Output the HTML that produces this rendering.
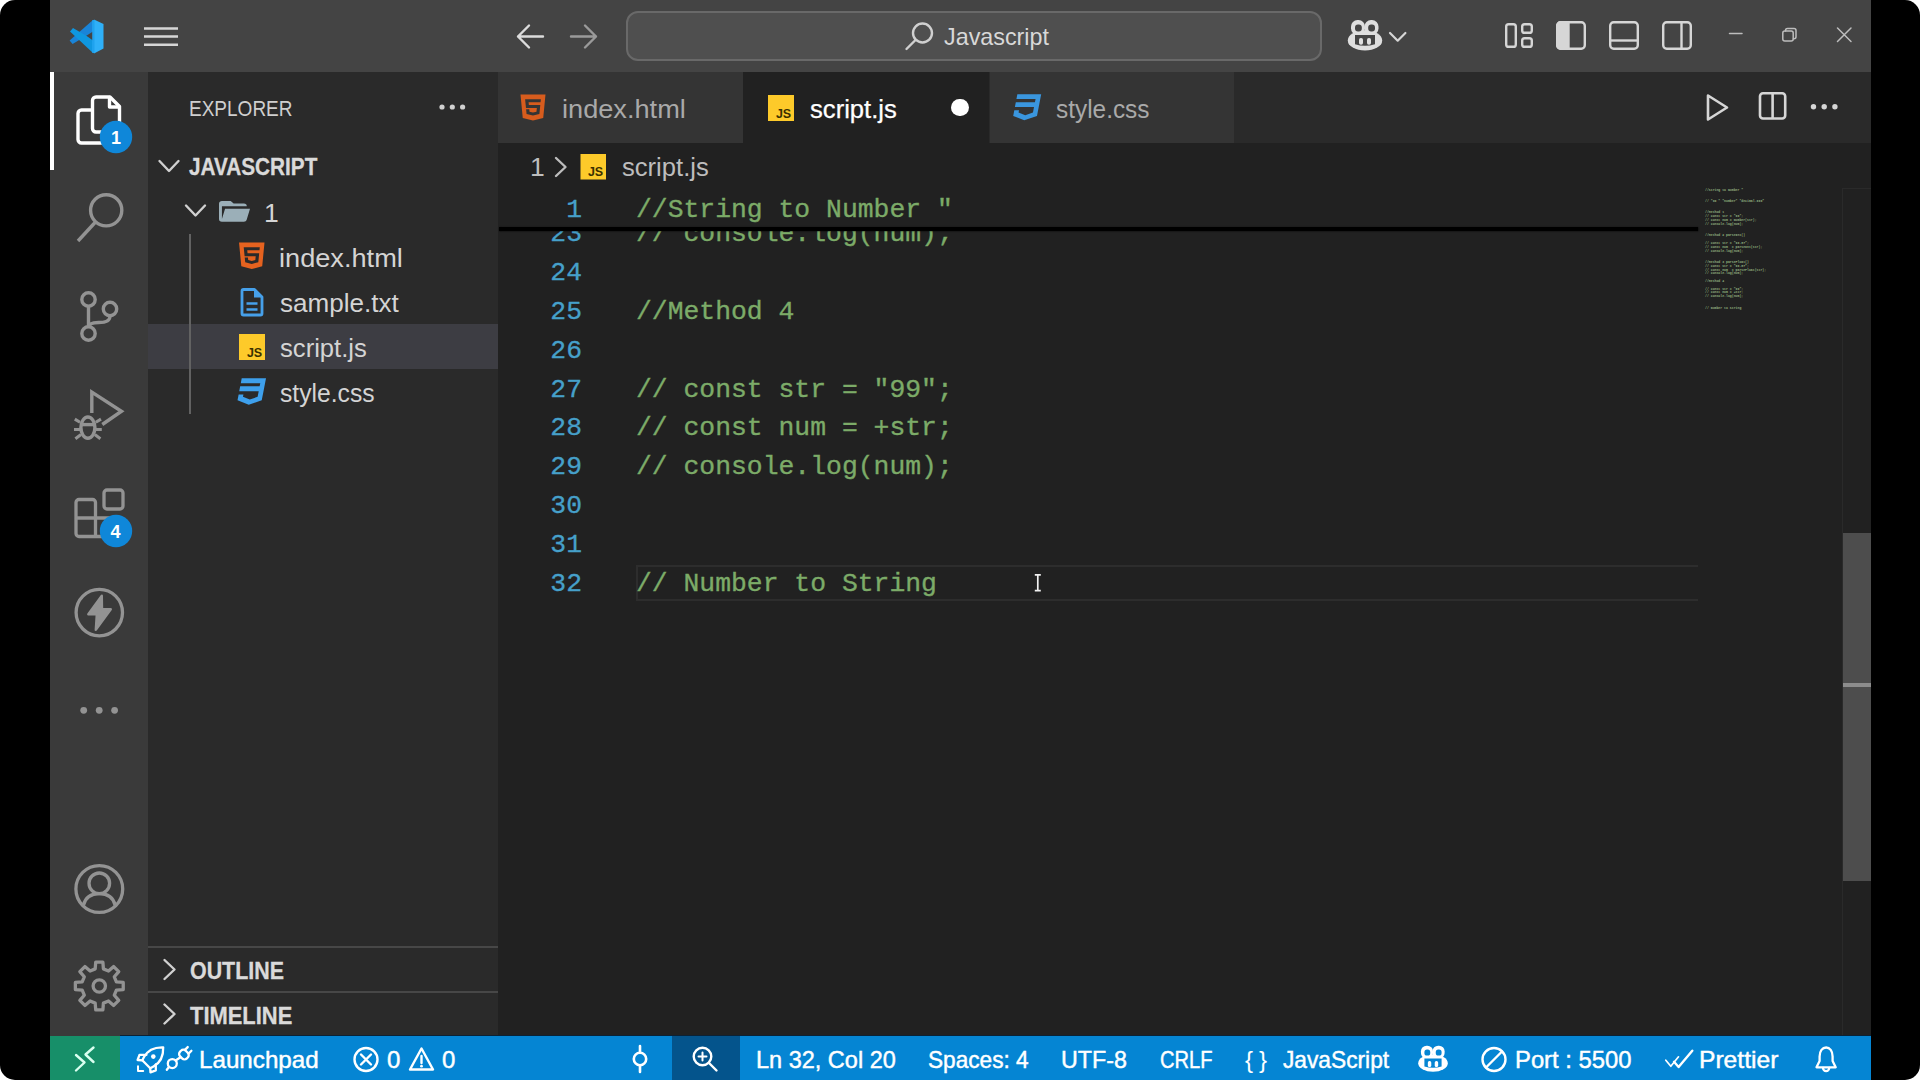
<!DOCTYPE html>
<html lang="en">
<head>
<meta charset="utf-8">
<title>script.js - Javascript - Visual Studio Code</title>
<style>
*{box-sizing:border-box;margin:0;padding:0}
html,body{width:1920px;height:1080px;overflow:hidden;background:#fff}
body{font-family:"Liberation Sans",sans-serif;color:#ccc;position:relative}
#frame{position:absolute;left:0;top:0;width:1920px;height:1080px;background:#000;border-radius:15px;overflow:hidden}
/* everything inside #frame is in page coordinates */
.b{position:absolute}
#editorbg{left:50px;top:0;width:1821px;height:1080px;background:#212121}
#titlebar{left:50px;top:0;width:1821px;height:72px;background:#444444}
#activity{left:50px;top:72px;width:98px;height:964px;background:#3a3a3a}
#sidebar{left:148px;top:72px;width:350px;height:964px;background:#2a2a2a}
#tabs{left:497px;top:72px;width:1374px;height:71px;background:#2a2a2a}
#status{left:50px;top:1036px;width:1821px;height:44px;background:#0585d3}
.t{position:absolute;white-space:nowrap;line-height:1;transform:translateY(-50%);color:#d4d4d4;font-size:26.5px}
.w{color:#fff}
.code{position:absolute;font-family:"Liberation Mono",monospace;font-size:26.4px;line-height:1;white-space:pre;color:#7cab68;-webkit-text-stroke:0.35px #7cab68;transform:translateY(-50%)}
.ln{position:absolute;font-family:"Liberation Mono",monospace;font-size:26.4px;line-height:1;white-space:pre;color:#46a0ca;-webkit-text-stroke:0.3px #46a0ca;transform:translateY(-50%);text-align:right;width:60px}
#icons{position:absolute;left:0;top:0}
</style>
</head>
<body>
<div id="frame">
<div class="b" id="editorbg"></div>
<div class="b" id="titlebar"></div>
<div class="b" id="activity"></div>
<div class="b" id="sidebar"></div>
<div class="b" id="tabs"></div>
<div class="b" id="status"></div>
<!-- ===== TITLE BAR ===== -->
<div class="b" id="cmdbox" style="left:626px;top:11px;width:696px;height:50px;background:#4f4f4f;border:2px solid #696969;border-radius:12px"></div>
<span class="t" id="tx_title" style="left:944px;top:37px;font-size:24px;color:#d8d8d8;transform:translateY(-50%) scaleX(0.972);transform-origin:0 50%">Javascript</span>
<svg id="ic_title" class="b" style="left:0;top:0" width="1920" height="80" viewBox="0 0 1920 80" fill="none">
  <!-- vscode logo -->
  <g>
    <path d="M69.600 40.600 L72.600 44 L86.700 35.500 L93 31.500 L93 20 Z" fill="#1a84d8"/>
    <path d="M70 31.500 L73 28 L86.700 36 L93 40.500 L93 53 Z" fill="#0f97e0"/>
    <path d="M92.500 20.200 L94.500 19.800 L103.500 24 L103.500 48.500 L94.500 53.200 L92.500 52.800 Z" fill="#2fb0f8"/>
    <path d="M92.500 20.200 L94.500 19.800 L94.500 53.200 L92.500 52.800 Z" fill="#1fa2ee"/>
  </g>
  <!-- hamburger -->
  <g stroke="#d6d6d6" stroke-width="2.4">
    <path d="M144 28.5 H178 M144 36.5 H178 M144 44.7 H178"/>
  </g>
  <!-- back / forward -->
  <g stroke="#dcdcdc" stroke-width="2.4" stroke-linecap="round" stroke-linejoin="round">
    <path d="M543 36.5 H518 M529 25.5 L518 36.5 L529 47.5"/>
  </g>
  <g stroke="#9a9a9a" stroke-width="2.4" stroke-linecap="round" stroke-linejoin="round">
    <path d="M571 36.5 H596 M585 25.5 L596 36.5 L585 47.5"/>
  </g>
  <!-- search icon -->
  <g stroke="#d0d0d0" stroke-width="2.4" stroke-linecap="round">
    <circle cx="922.5" cy="33" r="9.5"/>
    <path d="M915.5 40 L906.5 49"/>
  </g>
  <!-- copilot -->
  <g id="copilot">
    <rect x="1351" y="20" width="14" height="15" rx="6.500" fill="#dedede"/>
    <rect x="1364.500" y="20" width="14" height="15" rx="6.500" fill="#dedede"/>
    <ellipse cx="1365" cy="40.400" rx="17.200" ry="10.100" fill="#dedede"/>
    <rect x="1355" y="24.600" width="6.800" height="7" rx="3" fill="#444"/>
    <rect x="1368.200" y="24.600" width="6.800" height="7" rx="3" fill="#444"/>
    <path d="M1355 35 H1375 V44.200 Q1365 47.200 1355 44.200 Z" fill="#444"/>
    <rect x="1359" y="38" width="4" height="6.800" rx="1.800" fill="#dedede"/>
    <rect x="1367" y="38" width="4" height="6.800" rx="1.800" fill="#dedede"/>
  </g>
  <path d="M1390 33 L1397.700 40.700 L1405.400 33" stroke="#d6d6d6" stroke-width="2.200" stroke-linecap="round" stroke-linejoin="round"/>
  <!-- layout icons -->
  <g stroke="#d6d6d6" stroke-width="2.400" stroke-linejoin="round">
    <rect x="1506.200" y="24.200" width="9.600" height="22.600" rx="2.400"/>
    <rect x="1522.200" y="24.200" width="9.600" height="8.600" rx="2.400"/>
    <rect x="1522.200" y="38.200" width="9.600" height="8.600" rx="2.400"/>
    <rect x="1557.200" y="22.200" width="27.600" height="26.600" rx="3.500"/>
    <path d="M1557.200 25.700 a3.500 3.500 0 0 1 3.500 -3.500 h7.800 v26.600 h-7.800 a3.500 3.500 0 0 1 -3.500 -3.500 z" fill="#d6d6d6"/>
    <rect x="1610.200" y="22.200" width="27.600" height="26.600" rx="3.500"/>
    <path d="M1610.200 40.500 h27.600"/>
    <rect x="1663.200" y="22.200" width="27.600" height="26.600" rx="3.500"/>
    <path d="M1681.500 22.200 v26.600"/>
  </g>
  <!-- window controls -->
  <g stroke="#bdbdbd" stroke-width="1.500" stroke-linecap="round" stroke-linejoin="round">
    <path d="M1729.500 33.600 H1742"/>
    <rect x="1782.800" y="31" width="10.400" height="10" rx="2"/>
    <path d="M1785.500 31 v-0.600 a2 2 0 0 1 2 -2 h6.500 a2 2 0 0 1 2 2 v6.400 a2 2 0 0 1 -2 2 h-0.600" />
    <path d="M1837.500 28 L1851 41.500 M1851 28 L1837.500 41.500"/>
  </g>
</svg>

<!-- ===== ACTIVITY BAR ===== -->
<div class="b" id="actind" style="left:50px;top:72px;width:4px;height:98px;background:#fff"></div>
<svg id="ic_act" class="b" style="left:0;top:0" width="160" height="1040" viewBox="0 0 160 1040" fill="none">
  <!-- files (active) -->
  <g stroke="#ffffff" stroke-width="3.400" stroke-linejoin="round" stroke-linecap="round">
    <path d="M96 97 h14 l9.500 9.500 v22 a3.500 3.500 0 0 1 -3.500 3.500 h-20 a3.500 3.500 0 0 1 -3.500 -3.500 v-28 a3.500 3.500 0 0 1 3.500 -3.500 z"/>
    <path d="M109.500 97.500 v9.500 h9.500"/>
    <path d="M92 110 h-10.500 a3.500 3.500 0 0 0 -3.500 3.500 v26 a3.500 3.500 0 0 0 3.500 3.500 h19 a3.500 3.500 0 0 0 3.500 -3.500 v-7"/>
  </g>
  <circle cx="116" cy="137" r="16.200" fill="#0f87d9"/>
  <!-- search -->
  <g stroke="#939393" stroke-width="3.400" stroke-linecap="butt">
    <circle cx="106.200" cy="210.300" r="15.600"/>
    <path d="M95.500 222 L78 241"/>
  </g>
  <!-- source control -->
  <g stroke="#939393" stroke-width="3.400">
    <circle cx="88.500" cy="299.500" r="6.700"/>
    <circle cx="88.500" cy="333.500" r="6.700"/>
    <circle cx="110" cy="309" r="6.700"/>
    <path d="M88.500 306.200 V326.800"/>
    <path d="M110 315.700 c0 6.500 -6.500 6.800 -11.500 6.800 c-4.500 0 -10 0.800 -10 5" />
  </g>
  <!-- run and debug -->
  <g stroke="#939393" stroke-width="3.400" stroke-linejoin="miter" fill="none">
    <path d="M91.800 413 V392 L121.500 411.200 L102.300 424.500"/>
    <ellipse cx="87.900" cy="427.600" rx="7" ry="10.600"/>
    <path d="M81 424.600 h13.800"/>
    <path d="M80 422.300 l-5.200 -3.200 M95.800 422.300 l5.200 -3.200 M80.500 429.500 h-6.500 M95.300 429.500 h6.500 M81 434.500 l-5.600 4.300 M94.800 434.500 l5.600 4.300" stroke-width="3"/>
  </g>
  <!-- extensions -->
  <g stroke="#939393" stroke-width="3.300" stroke-linejoin="round">
    <rect x="104" y="490" width="19" height="19" rx="3"/>
    <path d="M76 502.500 a3 3 0 0 1 3 -3 h13.500 a3 3 0 0 1 3 3 v15.500 h14.500 a3 3 0 0 1 3 3 v12.500 a3 3 0 0 1 -3 3 h-31 a3 3 0 0 1 -3 -3 z"/>
    <path d="M76 518 h19.500 v18.500"/>
  </g>
  <circle cx="116" cy="531" r="16.200" fill="#0f87d9"/>
  <!-- thunder -->
  <g>
    <circle cx="99.300" cy="612.600" r="23.200" stroke="#939393" stroke-width="3.300"/>
    <path d="M101.800 595.800 L88.300 614.300 H96.800 L95.800 629.800 L110.800 609.200 H102 Z" fill="#939393" stroke="#939393" stroke-width="2.400" stroke-linejoin="round"/>
  </g>
  <!-- more -->
  <g fill="#939393">
    <circle cx="83.700" cy="710.300" r="3.400"/><circle cx="99.200" cy="710.300" r="3.400"/><circle cx="114.600" cy="710.300" r="3.400"/>
  </g>
  <!-- account -->
  <g stroke="#939393" stroke-width="3.300">
    <circle cx="99.300" cy="889" r="23.400"/>
    <circle cx="99.300" cy="883.300" r="10.300"/>
    <path d="M83.300 905.500 c2 -8 8.300 -11.800 16 -11.800 s14 3.800 16 11.800"/>
  </g>
  <!-- gear -->
  <g transform="translate(99.300 986)">
    <g stroke="#939393" stroke-width="3.300" stroke-linejoin="round">
      <path id="gearp" d="M-4.11 -17.11 L-3.58 -23.93 L3.58 -23.93 L4.11 -17.11 L9.20 -15.01 L14.39 -19.45 L19.45 -14.39 L15.01 -9.20 L17.11 -4.11 L23.93 -3.58 L23.93 3.58 L17.11 4.11 L15.01 9.20 L19.45 14.39 L14.39 19.45 L9.20 15.01 L4.11 17.11 L3.58 23.93 L-3.58 23.93 L-4.11 17.11 L-9.20 15.01 L-14.39 19.45 L-19.45 14.39 L-15.01 9.20 L-17.11 4.11 L-23.93 3.58 L-23.93 -3.58 L-17.11 -4.11 L-15.01 -9.20 L-19.45 -14.39 L-14.39 -19.45 L-9.20 -15.01 Z"/>
      <circle cx="0" cy="0" r="6.200"/>
    </g>
  </g>
</svg>
<span class="t w" id="tx_b1" style="left:111px;top:138px;font-size:18px;font-weight:bold">1</span>
<span class="t w" id="tx_b4" style="left:110.500px;top:532px;font-size:18px;font-weight:bold">4</span>

<!-- ===== SIDEBAR ===== -->
<span class="t" id="tx_explorer" style="top:109px;font-size:22px;color:#cfcfcf;transform:translateY(-50%) scaleX(0.864);transform-origin:0 50%;left:189.0px">EXPLORER</span>
<span class="t" id="tx_js" style="-webkit-text-stroke:0.3px #dadada;left:189px;top:167px;font-size:23px;font-weight:bold;color:#dadada;transform:translateY(-50%) scaleX(0.902);transform-origin:0 50%">JAVASCRIPT</span>
<div class="b" id="selrow" style="left:148px;top:324px;width:350px;height:45px;background:#3d3d43"></div>
<div class="b" id="guide" style="left:189px;top:234px;width:2px;height:180px;background:#626262"></div>
<span class="t" id="tx_f1" style="left:264px;top:213px">1</span>
<span class="t" id="tx_index" style="top:258px;transform:translateY(-50%) scaleX(1.025);transform-origin:0 50%;left:279.0px">index.html</span>
<span class="t" id="tx_sample" style="left:280px;top:303px;transform:translateY(-50%) scaleX(0.983);transform-origin:0 50%">sample.txt</span>
<span class="t" id="tx_script" style="left:280px;top:348px;transform:translateY(-50%) scaleX(0.967);transform-origin:0 50%">script.js</span>
<span class="t" id="tx_style" style="left:280px;top:393px;transform:translateY(-50%) scaleX(0.931);transform-origin:0 50%">style.css</span>
<div class="b" style="left:148px;top:946px;width:350px;height:2px;background:#474747"></div>
<div class="b" style="left:148px;top:991px;width:350px;height:2px;background:#474747"></div>
<span class="t" id="tx_outline" style="-webkit-text-stroke:0.3px #dadada;left:190px;top:971px;font-size:23px;font-weight:bold;color:#dadada;transform:translateY(-50%) scaleX(0.931);transform-origin:0 50%">OUTLINE</span>
<span class="t" id="tx_timeline" style="-webkit-text-stroke:0.3px #dadada;left:190px;top:1016px;font-size:23px;font-weight:bold;color:#dadada;transform:translateY(-50%) scaleX(0.953);transform-origin:0 50%">TIMELINE</span>
<svg id="ic_side" class="b" style="left:0;top:0" width="500" height="1040" viewBox="0 0 500 1040" fill="none">
  <!-- explorer dots -->
  <g fill="#d0d0d0"><circle cx="442" cy="107" r="2.600"/><circle cx="452.300" cy="107" r="2.600"/><circle cx="462.600" cy="107" r="2.600"/></g>
  <!-- chevrons -->
  <g stroke="#d0d0d0" stroke-width="2.400" stroke-linecap="round" stroke-linejoin="round">
    <path d="M159.500 161 L169 171 L178.500 161"/>
    <path d="M186 205.500 L195.500 215.500 L205 205.500"/>
    <path d="M164.500 960 L174.500 969.500 L164.500 979"/>
    <path d="M164.500 1004.500 L174.500 1014 L164.500 1023.500"/>
  </g>
  <!-- folder open -->
  <path transform="translate(216.08 195.82) scale(1.462 1.294)" d="M19 20H4a2 2 0 0 1-2-2V6c0-1.11.89-2 2-2h6l2 2h7a2 2 0 0 1 2 2H4v10l2.14-8h17.07l-2.28 8.5c-.23.87-1.01 1.5-1.93 1.5z" fill="#9bafb8" />
  <!-- html5 -->
  <path transform="translate(232.46 238.08) scale(1.608 1.472)" d="M12 17.56 L16.07 16.43 L16.62 10.33 H9.38 L9.2 8.3 H16.8 L17 6.31 H7 L7.56 12.32 H14.45 L14.22 14.9 L12 15.5 L9.78 14.9 L9.64 13.24 H7.64 L7.93 16.43 L12 17.56 M4.07 3 H19.93 L18.5 19.2 L12 21 L5.5 19.2 L4.07 3 Z" fill="#e5621f" fill-rule="evenodd"/>
  <!-- txt document -->
  <g id="g_txt">
    <path d="M243.500 289.500 h11 l7.500 7.500 v16.500 a1.500 1.500 0 0 1 -1.500 1.500 h-17 a1.500 1.500 0 0 1 -1.500 -1.500 v-22.500 a1.500 1.500 0 0 1 1.500 -1.500 z" stroke="#46a0ea" stroke-width="2.800" stroke-linejoin="round"/>
    <path d="M254 289.500 v8 h8 z" fill="#46a0ea"/>
    <path d="M246.500 303.500 h11 M246.500 309.500 h11" stroke="#46a0ea" stroke-width="2.600"/>
  </g>
  <!-- js -->
  <g id="g_js">
    <rect x="239" y="334" width="26" height="26" fill="#fdca2a"/>
  </g>
  <!-- css3 -->
  <path transform="translate(234.55 373.90) scale(1.434 1.467)" d="M5 3 L4.35 6.34 H17.94 L17.5 8.5 H3.92 L3.26 11.83 H16.85 L16.09 15.64 L10.61 17.45 L5.86 15.64 L6.19 14 H2.85 L2.06 18 L9.91 21 L18.96 18 L20.16 11.97 L20.4 10.76 L21.94 3 H5 Z" fill="#3ea0ec" />
</svg>
<span class="t" id="tx_jsic1" style="left:247px;top:352.500px;font-size:12.500px;font-weight:bold;color:#3a3000;letter-spacing:-0.3px">JS</span>

<!-- ===== TABS ===== -->
<div class="b" id="tab1" style="left:498px;top:72px;width:245px;height:71px;background:#343434"></div>
<div class="b" id="tab2" style="left:743px;top:72px;width:246px;height:71px;background:#212121"></div>
<div class="b" id="tab3" style="left:990px;top:72px;width:244px;height:71px;background:#343434"></div>
<span class="t" id="tx_tab1" style="top:109px;color:#a9a9a9;transform:translateY(-50%) scaleX(1.025);transform-origin:0 50%;left:562.0px">index.html</span>
<span class="t w" id="tx_tab2" style="-webkit-text-stroke:0.25px #fff;left:810px;top:109px;transform:translateY(-50%) scaleX(0.967);transform-origin:0 50%">script.js</span>
<span class="t" id="tx_tab3" style="left:1056px;top:109px;color:#a9a9a9;transform:translateY(-50%) scaleX(0.920);transform-origin:0 50%">style.css</span>
<div class="b" id="dirty" style="left:951px;top:98.500px;width:17.500px;height:17.500px;border-radius:50%;background:#fff"></div>
<span class="t" id="tx_bc1" style="left:530px;top:167px;color:#bdbdbd">1</span>
<span class="t" id="tx_bc2" style="left:622px;top:167px;color:#bdbdbd;transform:translateY(-50%) scaleX(0.966);transform-origin:0 50%">script.js</span>
<svg id="ic_tabs" class="b" style="left:0;top:0" width="1920" height="200" viewBox="0 0 1920 200" fill="none">
  <!-- html5 tab icon -->
  <path transform="translate(514.08 90.17) scale(1.576 1.444)" d="M12 17.56 L16.07 16.43 L16.62 10.33 H9.38 L9.2 8.3 H16.8 L17 6.31 H7 L7.56 12.32 H14.45 L14.22 14.9 L12 15.5 L9.78 14.9 L9.64 13.24 H7.64 L7.93 16.43 L12 17.56 M4.07 3 H19.93 L18.5 19.2 L12 21 L5.5 19.2 L4.07 3 Z" fill="#d75c1d" fill-rule="evenodd"/>
  <rect x="768" y="95" width="26" height="26" fill="#fdca2a"/>
  <!-- css tab icon -->
  <path transform="translate(1010.30 89.97) scale(1.408 1.444)" d="M5 3 L4.35 6.34 H17.94 L17.5 8.5 H3.92 L3.26 11.83 H16.85 L16.09 15.64 L10.61 17.45 L5.86 15.64 L6.19 14 H2.85 L2.06 18 L9.91 21 L18.96 18 L20.16 11.97 L20.4 10.76 L21.94 3 H5 Z" fill="#3a96de" />
  <!-- breadcrumb chevron + js icon -->
  <path d="M556 158 L565.500 167 L556 176" stroke="#bdbdbd" stroke-width="2.400" stroke-linecap="round" stroke-linejoin="round"/>
  <rect x="580.500" y="154" width="25.500" height="25.500" fill="#fdca2a"/>
  <!-- editor actions -->
  <g stroke="#d6d6d6" stroke-width="2.600" stroke-linejoin="round">
    <path d="M1708 95.500 L1727 107.500 L1708 119.500 Z"/>
    <rect x="1760" y="93.300" width="25.200" height="25.200" rx="3"/>
    <path d="M1772.600 93.300 v25.200"/>
  </g>
  <g fill="#d6d6d6"><circle cx="1813.500" cy="106.700" r="2.700"/><circle cx="1824.200" cy="106.700" r="2.700"/><circle cx="1834.900" cy="106.700" r="2.700"/></g>
</svg>
<span class="t" id="tx_jsic2" style="left:776px;top:113.500px;font-size:12.500px;font-weight:bold;color:#3a3000;letter-spacing:-0.3px">JS</span>
<span class="t" id="tx_jsic3" style="left:588px;top:172px;font-size:12.500px;font-weight:bold;color:#3a3000;letter-spacing:-0.3px">JS</span>

<!-- ===== EDITOR ===== -->
<div class="b" id="curline" style="left:636px;top:565px;width:1062px;height:36px;border:2px solid #2d2d2d;border-right:none"></div>
<span class="ln" style="left:522px;top:234.0px">23</span><span class="code" style="left:636px;top:234.0px">// console.log(num);</span>
<span class="ln" style="left:522px;top:272.9px">24</span>
<span class="ln" style="left:522px;top:311.7px">25</span><span class="code" style="left:636px;top:311.7px">//Method 4</span>
<span class="ln" style="left:522px;top:350.6px">26</span>
<span class="ln" style="left:522px;top:389.5px">27</span><span class="code" style="left:636px;top:389.5px">// const str = "99";</span>
<span class="ln" style="left:522px;top:428.3px">28</span><span class="code" style="left:636px;top:428.3px">// const num = +str;</span>
<span class="ln" style="left:522px;top:467.2px">29</span><span class="code" style="left:636px;top:467.2px">// console.log(num);</span>
<span class="ln" style="left:522px;top:506.1px">30</span>
<span class="ln" style="left:522px;top:544.9px">31</span>
<span class="ln" id="ln32" style="left:522px;top:583.8px">32</span><span class="code" id="code32" style="left:636px;top:583.8px">// Number to String</span>
<!-- sticky scroll -->
<div class="b" id="sticky" style="left:498px;top:187px;width:1199px;height:41px;background:#212121"></div>
<div class="b" id="stickyshadow" style="left:499px;top:227px;width:1199px;height:4px;background:#000;box-shadow:0 0 1.500px 0.500px rgba(0,0,0,0.8)"></div>
<span class="ln" id="ln1" style="left:522px;top:210px">1</span><span class="code" id="code1" style="left:636px;top:210px">//String to Number "</span>
<!-- minimap -->
<div class="b" id="minimap" style="left:1705px;top:188.100px;width:700px;height:1300px;transform-origin:0 0;transform:scale(0.1206,0.098);font-family:'Liberation Mono',monospace;font-size:26.400px;line-height:38.870px;white-space:pre;color:#a4c790;font-weight:bold;opacity:0.85">//String to Number "


// "99 " "number" "decimal.999"


//Method 1
// const str = "99";
// const num = Number(str);
// console.log(num);


//Method 2 parseInt()

// const str = "99.87";
// const num  = parseInt(str);
// console.log(num);


//Method 3 parseFloat()
// const str = "99.87";
// const num  = parseFloat(str);
// console.log(num);

//Method 4

// const str = "99";
// const num = +str;
// console.log(num);


// Number to String</div>
<!-- scrollbar -->
<div class="b" style="left:1842px;top:188px;width:1px;height:848px;background:#2a2a2a"></div>
<div class="b" style="left:1842px;top:188px;width:29px;height:1px;background:#2a2a2a"></div>
<div class="b" id="slider" style="left:1843px;top:533px;width:28px;height:348px;background:#4d4d4d"></div>
<div class="b" style="left:1843px;top:683px;width:28px;height:4px;background:#8c8c8c"></div>
<!-- mouse I-beam -->
<svg class="b" style="left:1030px;top:570px" width="16" height="26" viewBox="0 0 16 26" fill="none">
  <path d="M4.800 4.800 H10.800 M4.800 20.600 H10.800 M7.800 4.800 V20.600" stroke="#f0f0f0" stroke-width="1.700"/>
</svg>

<!-- ===== STATUS BAR ===== -->
<div class="b" id="statustop" style="left:120px;top:1034.700px;width:1751px;height:1.500px;background:#0b2236"></div>
<div class="b" id="remote" style="left:50px;top:1036px;width:70px;height:44px;background:#178f69"></div>
<div class="b" id="zoombg" style="left:672px;top:1036px;width:68px;height:44px;background:#04548c"></div>
<span class="t w" id="tx_launch" style="top:1060.300px;font-size:24px;-webkit-text-stroke:0.45px #fff;transform:translateY(-50%) scaleX(1.008);transform-origin:0 50%;left:199.0px">Launchpad</span>
<span class="t w" id="tx_e0" style="left:387px;top:1060.300px;font-size:24px;-webkit-text-stroke:0.45px #fff">0</span>
<span class="t w" id="tx_w0" style="left:442px;top:1060.300px;font-size:24px;-webkit-text-stroke:0.45px #fff">0</span>
<span class="t w" id="tx_ln" style="top:1060.300px;font-size:24px;-webkit-text-stroke:0.45px #fff;transform:translateY(-50%) scaleX(0.979);transform-origin:0 50%;left:756.0px">Ln 32, Col 20</span>
<span class="t w" id="tx_spaces" style="top:1060.300px;font-size:24px;-webkit-text-stroke:0.45px #fff;transform:translateY(-50%) scaleX(0.943);transform-origin:0 50%;left:928.0px">Spaces: 4</span>
<span class="t w" id="tx_utf" style="top:1060.300px;font-size:24px;-webkit-text-stroke:0.45px #fff;transform:translateY(-50%) scaleX(0.970);transform-origin:0 50%;left:1061.0px">UTF-8</span>
<span class="t w" id="tx_crlf" style="top:1060.300px;font-size:24px;-webkit-text-stroke:0.45px #fff;transform:translateY(-50%) scaleX(0.837);transform-origin:0 50%;left:1160.0px">CRLF</span>
<span class="t w" id="tx_braces" style="left:1245px;top:1059.500px;font-size:24px;letter-spacing:6px">{}</span>
<span class="t w" id="tx_lang" style="left:1283px;top:1060.300px;font-size:24px;-webkit-text-stroke:0.45px #fff;transform:translateY(-50%) scaleX(0.947);transform-origin:0 50%">JavaScript</span>
<span class="t w" id="tx_port" style="top:1060.300px;font-size:24px;-webkit-text-stroke:0.45px #fff;transform:translateY(-50%) scaleX(0.992);transform-origin:0 50%;left:1515.0px">Port : 5500</span>
<span class="t w" id="tx_prettier" style="top:1060.300px;font-size:24px;-webkit-text-stroke:0.45px #fff;transform:translateY(-50%) scaleX(1.026);transform-origin:0 50%;left:1699.0px">Prettier</span>
<svg id="ic_status" class="b" style="left:0;top:1036px" width="1920" height="44" viewBox="0 1036 1920 44" fill="none">
  <!-- remote -->
  <g stroke="#d9fff0" stroke-width="2.400" stroke-linecap="round" stroke-linejoin="round">
    <path d="M76 1055 L84.500 1062.500 L76 1070.500"/>
    <path d="M93.500 1047.500 L85.500 1054.500 L93.500 1062"/>
  </g>
  <!-- rocket -->
  <g stroke="#fff" stroke-width="2.300" stroke-linecap="round" stroke-linejoin="round">
    <path d="M163.200 1047.300 C154 1047 147.500 1050.500 144 1057 L142.300 1060.300 L150.200 1068.300 L153.500 1066.500 C160 1063 163.500 1056.500 163.200 1047.300 Z"/>
    <path d="M146.500 1054.800 H139.500 L137.600 1060 L142.300 1060.300 M155.800 1064.500 V1070.300 L150.500 1072.300 L150.200 1068.300"/>
    <circle cx="153.300" cy="1056.600" r="2.300" fill="#fff" stroke="none"/>
    <path d="M138 1066.300 V1071 H143.200" stroke-width="2"/>
  </g>
  <!-- plug -->
  <g stroke="#fff" stroke-width="2.300" stroke-linecap="round" stroke-linejoin="round">
    <circle cx="172.300" cy="1063.600" r="4.500"/>
    <g transform="translate(184.200 1054.300) rotate(45)">
      <rect x="-4.800" y="-3.600" width="9.600" height="8" rx="3.400"/>
      <path d="M-2.600 -3.600 v-4 M2.600 -3.600 v-4"/>
    </g>
    <path d="M175.600 1060.500 L180.500 1057.300 M169 1067 L166.800 1069.800"/>
  </g>
  <!-- error -->
  <g stroke="#fff" stroke-width="2.400" stroke-linecap="round">
    <circle cx="366" cy="1059.500" r="11.500"/>
    <path d="M361 1054.500 L371 1064.500 M371 1054.500 L361 1064.500"/>
  </g>
  <!-- warning -->
  <g stroke="#fff" stroke-width="2.400" stroke-linejoin="round" stroke-linecap="round">
    <path d="M421.500 1048.500 L433 1069.500 H410 Z"/>
    <path d="M421.500 1056 V1063"/>
  </g>
  <circle cx="421.500" cy="1066.200" r="1.400" fill="#fff"/>
  <!-- git commit-ish -->
  <g stroke="#fff" stroke-width="2.600" stroke-linecap="round">
    <circle cx="640" cy="1059" r="6.200"/>
    <path d="M640 1046 V1052.500 M640 1065.500 V1072"/>
  </g>
  <!-- zoom -->
  <g stroke="#fff" stroke-width="2.400" stroke-linecap="round">
    <circle cx="702.500" cy="1056.500" r="8.800"/>
    <path d="M709 1063 L716.500 1070.500"/>
    <path d="M698.500 1056.500 H706.500 M702.500 1052.500 V1060.500" stroke-width="2"/>
  </g>
  <!-- copilot small -->
  <g transform="translate(1433 1058.800) scale(0.860) translate(-1365 -35.300)">
    <rect x="1351" y="20" width="14" height="15" rx="6.500" fill="#fff"/>
    <rect x="1364.500" y="20" width="14" height="15" rx="6.500" fill="#fff"/>
    <ellipse cx="1365" cy="40.400" rx="17.200" ry="10.100" fill="#fff"/>
    <rect x="1355" y="24.600" width="6.800" height="7" rx="3" fill="#0585d3"/>
    <rect x="1368.200" y="24.600" width="6.800" height="7" rx="3" fill="#0585d3"/>
    <path d="M1355 35 H1375 V44.200 Q1365 47.200 1355 44.200 Z" fill="#0585d3"/>
    <rect x="1359" y="38" width="4" height="6.800" rx="1.800" fill="#fff"/>
    <rect x="1367" y="38" width="4" height="6.800" rx="1.800" fill="#fff"/>
  </g>
  <!-- port: circle slash -->
  <g stroke="#fff" stroke-width="2.400" stroke-linecap="round">
    <circle cx="1494" cy="1059.500" r="11.500"/>
    <path d="M1486 1067.500 L1502 1051.500"/>
  </g>
  <!-- double check -->
  <g stroke="#fff" stroke-linecap="round" stroke-linejoin="round">
    <path d="M1665.800 1060.200 L1670.800 1066.300 L1678.500 1056.800" stroke-width="1.700"/>
    <path d="M1674 1061.800 L1678.600 1067 L1692.300 1050.700" stroke-width="2.400"/>
  </g>
  <!-- bell -->
  <g stroke="#fff" stroke-width="2.300" stroke-linejoin="round" stroke-linecap="round">
    <path d="M1816.500 1067.300 L1819.600 1061 V1056.500 c0 -5.500 2.800 -9 6.500 -9 s6.500 3.500 6.500 9 V1061 L1835.700 1067.300 Z"/>
    <path d="M1823 1068 a3.100 3.100 0 0 0 6.200 0"/>
  </g>
</svg>

<!--SECTIONS-->
</div>
</body>
</html>
